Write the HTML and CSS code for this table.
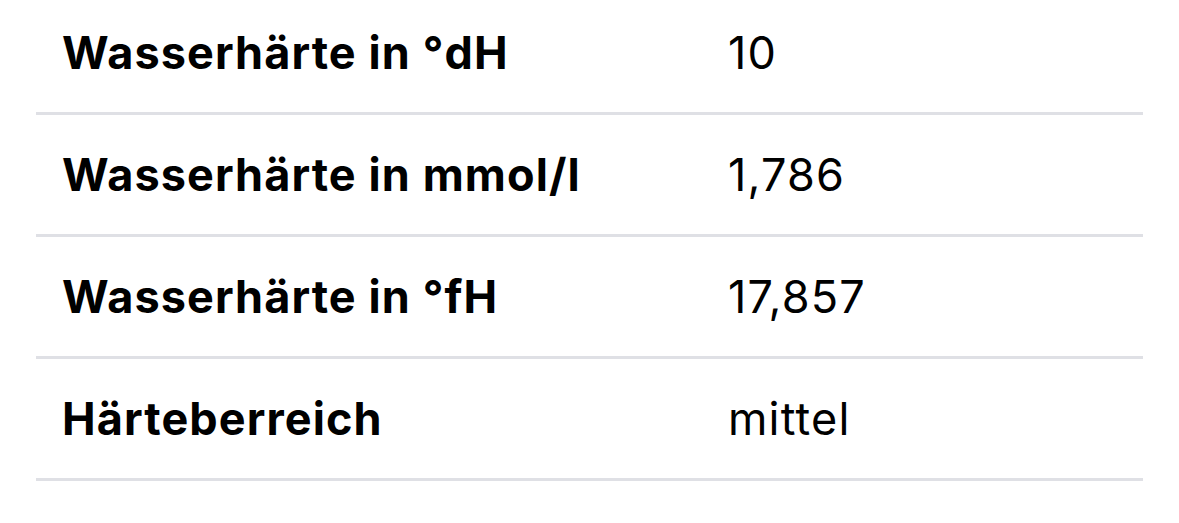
FILE: index.html
```html
<!DOCTYPE html>
<html lang="de">
<head>
<meta charset="utf-8">
<link rel="stylesheet" href="styles.css">
</head>
<body>
<div class="list">
  <div class="row"><div class="label">Wasserhärte in °dH</div><div class="value">10</div></div>
  <div class="row"><div class="label">Wasserhärte in mmol/l</div><div class="value">1,786</div></div>
  <div class="row"><div class="label">Wasserhärte in °fH</div><div class="value">17,857</div></div>
  <div class="row"><div class="label">Härteberreich</div><div class="value">mittel</div></div>
</div>
</body>
</html>
```
FILE: styles.css
```css
html, body {
  margin: 0;
  padding: 0;
  background: #ffffff;
}
body {
  font-family: Inter, "Liberation Sans", sans-serif;
  color: #000000;
  overflow: hidden;
}
.list {
  margin: -7px 36px 0 36px;
}
.row {
  display: grid;
  grid-template-columns: 666px 1fr;
  align-items: center;
  height: 119px;
  padding-left: 26px;
  border-bottom: 3px solid #dfe0e5;
  font-size: 45px;
}
.label {
  font-weight: 700;
  letter-spacing: 1.1px;
}
.value {
  font-weight: 400;
  letter-spacing: 1.2px;
}
```
